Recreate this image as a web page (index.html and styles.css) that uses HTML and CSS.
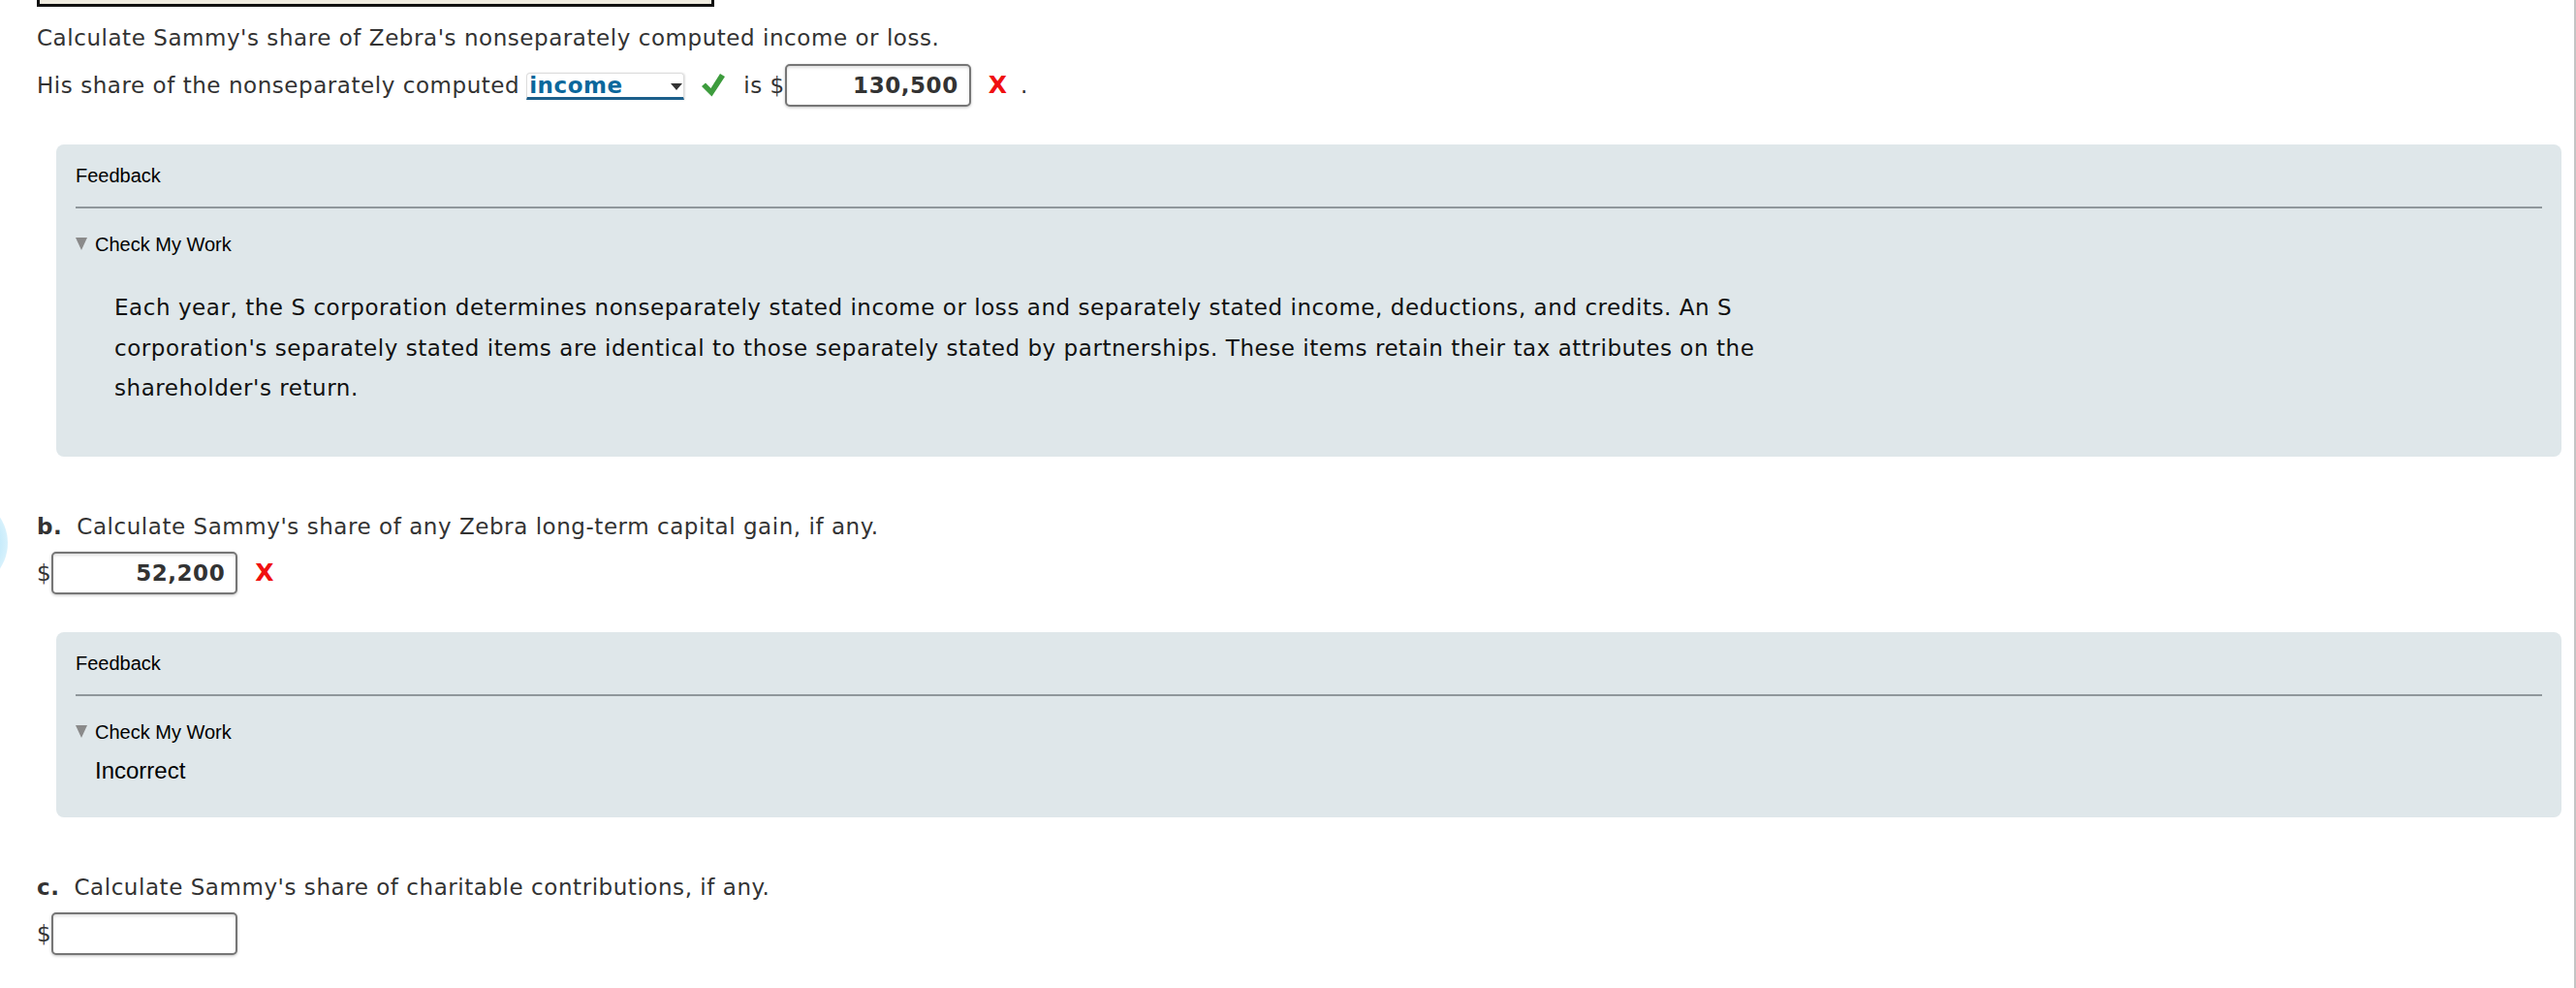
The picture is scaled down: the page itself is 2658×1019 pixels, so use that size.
FILE: index.html
```html
<!DOCTYPE html>
<html lang="en">
<head>
    <link rel="stylesheet" href="styles.css">
    <meta charset="UTF-8">
    <title>Sammy's share - Zebra</title>
</head>
<body>
    <div class="page">
        <div class="prev-box"></div>

        <div class="part">
            <p class="prompt">Calculate Sammy's share of Zebra's nonseparately computed income or loss.</p>
            <div class="answer-line">
                <span>His share of the nonseparately computed</span>
                <span class="dropdown">
                    <span class="dropdown-value">income</span>
                    <span class="caret"></span>
                </span>
                <svg class="check" width="24" height="24" viewBox="0 0 24 24">
                    <polygon points="0,13 4,9.5 9.5,15 19,0 24,3 10.5,23.5" fill="#3d9c3d"/>
                </svg>
                <span class="is">is $</span>
                <input class="amount" type="text" value="130,500" readonly>
                <span class="wrong">X</span>
                <span class="dot">.</span>
            </div>
        </div>

        <div class="feedback">
            <div class="feedback-title">Feedback</div>
            <div class="feedback-rule"></div>
            <div class="check-work"><span class="tri"></span>Check My Work</div>
            <p class="explain">Each year, the S corporation determines nonseparately stated income or loss and separately stated income, deductions, and credits. An S corporation's separately stated items are identical to those separately stated by partnerships. These items retain their tax attributes on the shareholder's return.</p>
        </div>

        <div class="part part-gap">
            <p class="prompt"><b class="label">b.</b>Calculate Sammy's share of any Zebra long-term capital gain, if any.</p>
            <div class="answer-line short">
                <span>$</span>
                <input class="amount" type="text" value="52,200" readonly>
                <span class="wrong">X</span>
            </div>
        </div>

        <div class="feedback small">
            <div class="feedback-title">Feedback</div>
            <div class="feedback-rule"></div>
            <div class="check-work"><span class="tri"></span>Check My Work</div>
            <p class="result">Incorrect</p>
        </div>

        <div class="part part-gap">
            <p class="prompt"><b class="label">c.</b>Calculate Sammy's share of charitable contributions, if any.</p>
            <div class="answer-line short">
                <span>$</span>
                <input class="amount" type="text" value="" readonly>
            </div>
        </div>
    </div>
    <div class="bubble"></div>
</body>
</html>
```

FILE: styles.css
```css
*{
    margin: 0;
    padding: 0;
    box-sizing: border-box;
}
body{
    background: #fff;
    font-family: "DejaVu Sans", Verdana, sans-serif;
    color: #333;
    overflow: hidden;
}
.page{
    width: 2658px;
    min-height: 1019px;
    padding-left: 38px;
    border-right: 2px solid #c4c4c4;
}
.prev-box{
    width: 699px;
    height: 7px;
    background: #efebdf;
    border: 3px solid #111;
    border-top: 0;
}
.prompt{
    font-size: 23px;
    letter-spacing: .55px;
    line-height: 26px;
    margin-top: 19px;
}
.part-gap .prompt{
    margin-top: 59px;
}
.label{
    margin-right: 15px;
}
.answer-line{
    display: flex;
    align-items: baseline;
    font-size: 23px;
    letter-spacing: .55px;
    line-height: 26px;
    margin-top: 14px;
}
.short{
    margin-top: 13px;
}
.dropdown{
    display: inline-flex;
    align-items: center;
    justify-content: space-between;
    width: 163px;
    height: 28px;
    margin-left: 7px;
    padding: 0 1px 0 2px;
    border: 1px solid #dcdcdc;
    border-bottom: 3px solid #1c5f8b;
    border-radius: 4px 4px 0 0;
    box-shadow: 1px 0 2px rgba(0,0,0,.12);
}
.dropdown-value{
    font-weight: bold;
    color: #0b689c;
    line-height: 24px;
}
.caret{
    width: 0;
    height: 0;
    border-left: 6px solid transparent;
    border-right: 6px solid transparent;
    border-top: 7px solid #333;
    margin-top: 2px;
}
.check{
    align-self: center;
    margin-left: 18px;
}
.is{
    margin-left: 19px;
}
.amount{
    width: 192px;
    height: 44px;
    border: 2px solid #767676;
    border-radius: 5px;
    box-shadow: inset 0 2px 3px rgba(0,0,0,.12), 0 1px 3px rgba(0,0,0,.25);
    font-family: "DejaVu Sans", Verdana, sans-serif;
    font-size: 23px;
    letter-spacing: .55px;
    font-weight: bold;
    color: #333;
    text-align: right;
    padding: 0 11px 0 4px;
    background: #fff;
    outline: none;
}
.wrong{
    font-size: 25px;
    letter-spacing: 0;
    font-weight: bold;
    color: #f01010;
    margin-left: 18px;
}
.dot{
    margin-left: 14px;
}
.feedback{
    margin: 39px 13px 0 20px;
    background: #dfe7ea;
    border-radius: 8px;
    padding: 21px 20px 49px;
    font-family: "Liberation Sans", Arial, sans-serif;
    color: #000;
}
.feedback.small{
    padding-bottom: 35px;
}
.feedback-title{
    font-size: 20px;
    line-height: 23px;
}
.feedback-rule{
    height: 2px;
    background: #8f979b;
    margin-top: 20px;
}
.check-work{
    display: flex;
    align-items: center;
    font-size: 20px;
    line-height: 23px;
    margin-top: 26px;
}
.tri{
    width: 0;
    height: 0;
    border-left: 6px solid transparent;
    border-right: 6px solid transparent;
    border-top: 13px solid #8a8a8a;
    margin-right: 8px;
    margin-top: -2px;
}
.explain{
    font-family: "DejaVu Sans", Verdana, sans-serif;
    font-size: 23px;
    letter-spacing: .55px;
    line-height: 41.7px;
    color: #111;
    margin-top: 33px;
    padding-left: 40px;
    max-width: 1800px;
}
.result{
    font-size: 24px;
    line-height: 26px;
    margin-top: 15px;
    padding-left: 20px;
}
.bubble{
    position: absolute;
    left: -88px;
    top: 512px;
    width: 96px;
    height: 96px;
    border-radius: 50%;
    background: radial-gradient(circle, #9fdcf6 0%, #c9ecfb 60%, rgba(220,242,252,0) 100%);
}
```
